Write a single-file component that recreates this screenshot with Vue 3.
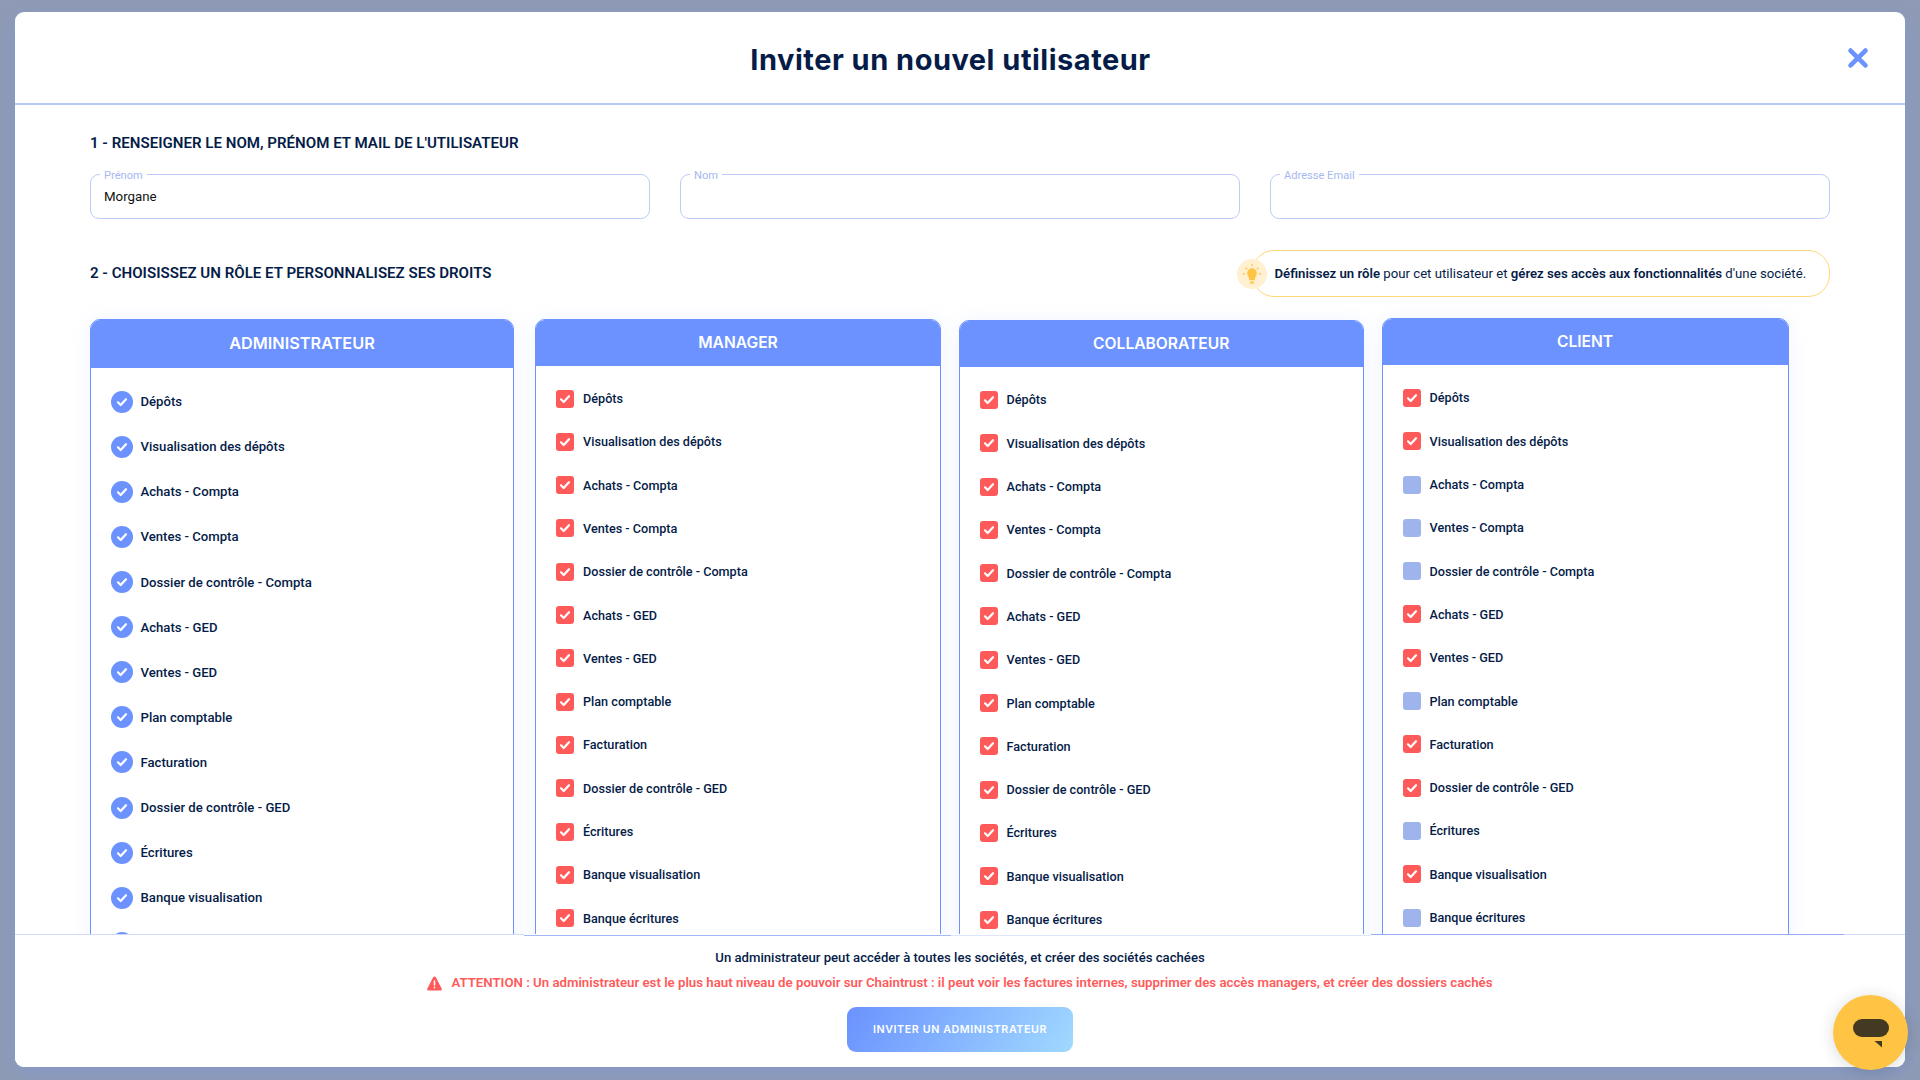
<template>
  <div class="overlay">
    <div class="modal">
      <header class="modal-header">
        <h1>Inviter un nouvel utilisateur</h1>
        <button class="btn-close" aria-label="Fermer">
          <svg viewBox="0 0 20 20"><path d="M3.2 3.2 L16.8 16.8 M16.8 3.2 L3.2 16.8" /></svg>
        </button>
      </header>

      <main class="modal-body">
        <h2>1 - Renseigner le nom, prénom et mail de l'utilisateur</h2>
        <div class="fields">
          <fieldset v-for="f in fields" :key="f.label" class="field">
            <legend>{{ f.label }}</legend>
            <input v-model="f.value" type="text" />
          </fieldset>
        </div>

        <div class="roles-head">
          <h2>2 - Choisissez un rôle et personnalisez ses droits</h2>
          <div class="tip">
            <span class="tip-icon">
              <svg viewBox="0 0 30 30">
                <path class="bulb" d="M15 9.2a4.8 5 0 0 0-4.8 5c0 2.3 1.6 3.4 1.9 5.3v1.8h5.8v-1.8c.3-1.9 1.9-3 1.9-5.3a4.8 5 0 0 0-4.8-5z" />
                <path class="ray" d="M13.2 23h3.6M14 24.2h2M15 5.3v1.7M8.9 8.8l1 1.2M21.1 8.8l-1 1.2M6.2 14.9h1.5M22.3 14.9h1.5" />
              </svg>
            </span>
            <p><b>Définissez un rôle</b> pour cet utilisateur et <b>gérez ses accès aux fonctionnalités</b> d'une société.</p>
          </div>
        </div>

        <div class="roles">
          <section v-for="role in roles" :key="role.id" class="role" :class="role.id">
            <h3>{{ role.name }}</h3>
            <ul>
              <li v-for="(right, i) in rights" :key="right">
                <span class="check" :class="{ off: role.off.includes(i) }">
                  <svg v-if="!role.off.includes(i)" viewBox="0 0 12 12"><path d="M2 6.3 L4.7 9 L10 3.2" /></svg>
                </span>
                {{ right }}
              </li>
            </ul>
          </section>
        </div>
      </main>

      <footer class="modal-footer">
        <div class="edge"><span></span><span></span><span></span><span></span><span></span></div>
        <p class="info">Un administrateur peut accéder à toutes les sociétés, et créer des sociétés cachées</p>
        <p class="warning">
          <svg viewBox="0 0 16 16">
            <path d="M8 .6c.7 0 1.2.3 1.6 1l6 11.6c.7 1.3 0 2.3-1.4 2.3H1.8C.4 15.5-.3 14.5.4 13.2l6-11.6c.4-.7.9-1 1.6-1z" />
            <path class="mark" d="M8 5.3v4.2M8 12v.6" />
          </svg>
          <span>ATTENTION : Un administrateur est le plus haut niveau de pouvoir sur Chaintrust : il peut voir les factures internes, supprimer des accès managers, et créer des dossiers cachés</span>
        </p>
        <button class="btn-invite">Inviter un administrateur</button>
      </footer>
    </div>

    <button class="chat" aria-label="Chat">
      <svg viewBox="0 0 36 36">
        <rect x="0" y="4" width="36" height="18" rx="9" />
        <path d="M21.5 26h7.5v6.500z" />
      </svg>
    </button>
  </div>
</template>

<script setup>
import { ref } from 'vue'

const fields = ref([
  { label: 'Prénom', value: 'Morgane' },
  { label: 'Nom', value: '' },
  { label: 'Adresse Email', value: '' }
])

const rights = [
  'Dépôts',
  'Visualisation des dépôts',
  'Achats - Compta',
  'Ventes - Compta',
  'Dossier de contrôle - Compta',
  'Achats - GED',
  'Ventes - GED',
  'Plan comptable',
  'Facturation',
  'Dossier de contrôle - GED',
  'Écritures',
  'Banque visualisation',
  'Banque écritures'
]

// off : index des droits décochés
const roles = [
  { id: 'admin', name: 'Administrateur', off: [] },
  { id: 'manager', name: 'Manager', off: [] },
  { id: 'collab', name: 'Collaborateur', off: [] },
  { id: 'client', name: 'Client', off: [2, 3, 4, 7, 10, 12] }
]
</script>

<style>
body {
  margin: 0;
  overflow: hidden;
}
</style>

<style scoped>
* {
  box-sizing: border-box;
}
h1, h2, h3, p, ul {
  margin: 0;
  padding: 0;
}
button {
  border: none;
  padding: 0;
  cursor: pointer;
}
.overlay {
  width: 1920px;
  height: 1080px;
  padding: 12px 15px 13px;
  background: #8f9bb5;
  font-family: Roboto, sans-serif;
  color: #051c48;
}
.modal {
  height: 100%;
  display: flex;
  flex-direction: column;
  background: #fff;
  border-radius: 9px;
  overflow: hidden;
  box-shadow: 0 6px 18px rgba(107, 146, 255, 0.25);
}
.modal-header {
  position: relative;
  flex: none;
  height: 93px;
  display: flex;
  align-items: center;
  justify-content: center;
  padding: 3px 19px 0 0;
  border-bottom: 2px solid #b9c7f5;
}
.modal-header h1 {
  font-family: Inter, sans-serif;
  font-size: 29px;
  font-weight: 700;
  letter-spacing: 0.5px;
}
.btn-close {
  position: absolute;
  right: 36px;
  top: 35px;
  width: 22px;
  height: 22px;
  background: none;
}
.btn-close svg {
  display: block;
  width: 22px;
  stroke: #6b92ff;
  stroke-width: 4.2;
  stroke-linecap: round;
}
.modal-body {
  flex: 1;
  min-height: 0;
  overflow: hidden;
  padding: 28px 75px 0;
}
h2 {
  font-size: 15.1px;
  line-height: 20px;
  font-weight: 600;
  text-transform: uppercase;
}
.fields {
  display: grid;
  grid-template-columns: repeat(3, 1fr);
  gap: 30px;
  margin-top: 14px;
}
.field {
  height: 52px;
  min-width: 0;
  margin: 0;
  padding: 0 13px;
  border: 1px solid #bccbf8;
  border-radius: 9px;
}
.field legend {
  margin-left: -4px;
  padding: 3px 4px 0;
  font-size: 11.1px;
  line-height: 11px;
  color: #a6b8f0;
}
.field input {
  display: block;
  width: 100%;
  height: 31px;
  padding: 0;
  border: none;
  outline: none;
  background: none;
  font: 13.3px Roboto, sans-serif;
  color: #111;
}
.roles-head {
  display: flex;
  align-items: center;
  justify-content: space-between;
  margin-top: 31px;
}
.roles-head h2 {
  padding-bottom: 2px;
}
.tip {
  position: relative;
  width: 578px;
  height: 47px;
  display: flex;
  align-items: center;
  padding-left: 21.5px;
  border: 1px solid #ffd777;
  border-radius: 22px;
  font-size: 13.2px;
  white-space: nowrap;
}
.tip b {
  font-weight: 600;
}
.tip-icon {
  position: absolute;
  left: -16px;
  top: 8px;
  width: 30px;
  height: 30px;
  border-radius: 50%;
  background: #fff0d2;
}
.tip-icon svg {
  display: block;
}
.bulb {
  fill: #ffc443;
}
.ray {
  fill: none;
  stroke: #ffc443;
  stroke-width: 1.2;
  stroke-linecap: round;
}
.roles {
  display: grid;
  grid-template-columns: 427.5px 406px 405.5px 407px;
  column-gap: 17.5px;
  margin-top: 21px;
  align-items: start;
}
.role {
  height: 640px;
  background: #fff;
  border: 1px solid #6b92ff;
  border-radius: 10px;
  box-shadow: 0 0 18px rgba(107, 146, 255, 0.1);
  overflow: hidden;
}
.role h3 {
  height: 46px;
  background: #6b92ff;
  color: #fff;
  font: 600 15.6px/46px Inter, sans-serif;
  text-align: center;
  text-transform: uppercase;
}
.role ul {
  list-style: none;
  padding: 11.35px 20px 0;
}
.role li {
  display: flex;
  align-items: center;
  gap: 9px;
  height: 43.3px;
  font-size: 12.65px;
  font-weight: 500;
}
.check {
  flex: none;
  width: 18px;
  height: 18px;
  display: grid;
  place-items: center;
  border-radius: 3px;
  background: #ff5a5a;
}
.check.off {
  background: #9fb4ec;
}
.check svg {
  width: 12px;
  fill: none;
  stroke: #fff;
  stroke-width: 2.2;
  stroke-linecap: round;
  stroke-linejoin: round;
}
.admin {
  width: 424px;
  margin-top: 1px;
}
.manager {
  margin-top: 1px;
}
.manager ul {
  padding-top: 10.9px;
}
.collab {
  margin-top: 2px;
}
.admin h3 {
  height: 48px;
  font-size: 16.3px;
  line-height: 47px;
}
.admin ul {
  padding: 11.15px 19.5px 0;
}
.admin li {
  height: 45.1px;
  gap: 8px;
  font-size: 13.15px;
}
.admin .check {
  width: 22px;
  height: 22px;
  border-radius: 50%;
  background: #6b92ff;
}
.modal-footer {
  flex: none;
  height: 133px;
  background: #fff;
  text-align: center;
}
.edge {
  display: grid;
  grid-template-columns: 509px 427px 420px 473px 1fr;
  height: 2px;
}
.edge span {
  height: 1px;
  background: #d0dafa;
}
.edge span:nth-child(2) {
  margin-top: 1px;
  background: #a5baf5;
}
.edge span:nth-child(3) {
  margin-top: 1px;
  background: #dfe6fc;
}
.edge span:nth-child(4) {
  background: #94adf6;
}
.info {
  margin-top: 12px;
  font-size: 13.15px;
  line-height: 20px;
  font-weight: 500;
}
.warning {
  display: flex;
  align-items: center;
  justify-content: center;
  gap: 9px;
  margin-top: 5px;
  font-size: 13.22px;
  line-height: 20px;
  font-weight: 600;
  color: #ff5a5a;
}
.warning svg {
  width: 15px;
  height: 15px;
  fill: #ff5a5a;
}
.warning .mark {
  stroke: #fff;
  stroke-width: 1.6;
  stroke-linecap: round;
}
.btn-invite {
  width: 226px;
  height: 45px;
  margin-top: 14px;
  border-radius: 9px;
  background: linear-gradient(120deg, #6b92ff, #a0d9ff);
  color: #fff;
  font: 600 10.7px Inter, sans-serif;
  letter-spacing: 0.6px;
  text-transform: uppercase;
}
.chat {
  position: absolute;
  left: 1833px;
  top: 995px;
  width: 75px;
  height: 75px;
  display: grid;
  place-items: center;
  border-radius: 50%;
  background: #ffc443;
  box-shadow: 0 2px 16px rgba(0, 30, 30, 0.16);
}
.chat svg {
  width: 36px;
  fill: #443921;
}
</style>
